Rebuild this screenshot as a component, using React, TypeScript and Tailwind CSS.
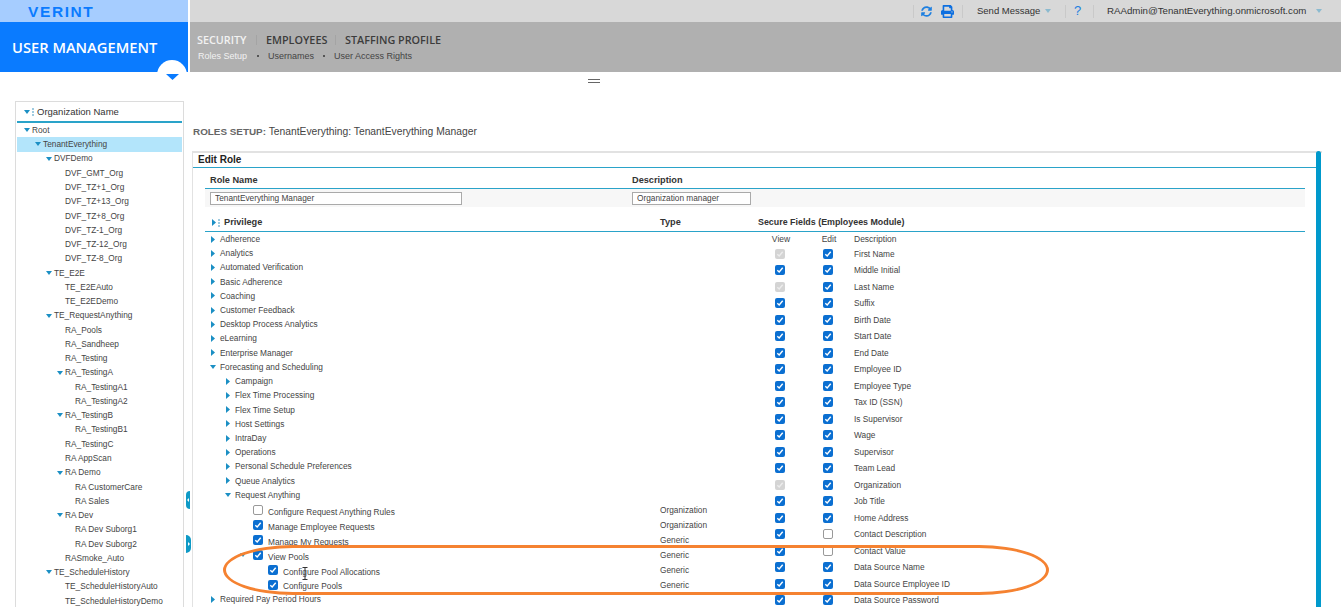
import { FaPrint, FaSyncAlt } from "react-icons/fa";

const treeRows = [
  { name: "Root", pad: "pl-[5px]", open: true },
  { name: "TenantEverything", pad: "pl-[16px]", open: true, selected: true },
  { name: "DVFDemo", pad: "pl-[27px]", open: true },
  { name: "DVF_GMT_Org", pad: "pl-[38px]" },
  { name: "DVF_TZ+1_Org", pad: "pl-[38px]" },
  { name: "DVF_TZ+13_Org", pad: "pl-[38px]" },
  { name: "DVF_TZ+8_Org", pad: "pl-[38px]" },
  { name: "DVF_TZ-1_Org", pad: "pl-[38px]" },
  { name: "DVF_TZ-12_Org", pad: "pl-[38px]" },
  { name: "DVF_TZ-8_Org", pad: "pl-[38px]" },
  { name: "TE_E2E", pad: "pl-[27px]", open: true },
  { name: "TE_E2EAuto", pad: "pl-[38px]" },
  { name: "TE_E2EDemo", pad: "pl-[38px]" },
  { name: "TE_RequestAnything", pad: "pl-[27px]", open: true },
  { name: "RA_Pools", pad: "pl-[38px]" },
  { name: "RA_Sandheep", pad: "pl-[38px]" },
  { name: "RA_Testing", pad: "pl-[38px]" },
  { name: "RA_TestingA", pad: "pl-[38px]", open: true },
  { name: "RA_TestingA1", pad: "pl-[48px]" },
  { name: "RA_TestingA2", pad: "pl-[48px]" },
  { name: "RA_TestingB", pad: "pl-[38px]", open: true },
  { name: "RA_TestingB1", pad: "pl-[48px]" },
  { name: "RA_TestingC", pad: "pl-[38px]" },
  { name: "RA AppScan", pad: "pl-[38px]" },
  { name: "RA Demo", pad: "pl-[38px]", open: true },
  { name: "RA CustomerCare", pad: "pl-[48px]" },
  { name: "RA Sales", pad: "pl-[48px]" },
  { name: "RA Dev", pad: "pl-[38px]", open: true },
  { name: "RA Dev Suborg1", pad: "pl-[48px]" },
  { name: "RA Dev Suborg2", pad: "pl-[48px]" },
  { name: "RASmoke_Auto", pad: "pl-[38px]" },
  { name: "TE_ScheduleHistory", pad: "pl-[27px]", open: true },
  { name: "TE_ScheduleHistoryAuto", pad: "pl-[38px]" },
  { name: "TE_ScheduleHistoryDemo", pad: "pl-[38px]" },
];

type Privilege = {
  name: string;
  pad: string;
  caret?: "right" | "down";
  wide?: boolean;
  check?: boolean;
  nested?: boolean;
  type?: string;
  h: string;
};

const top = "h-[14.22px]";
const sub = "h-[15px]";

const privileges: Privilege[] = [
  { name: "Adherence", pad: "pl-[6px]", caret: "right", h: top },
  { name: "Analytics", pad: "pl-[6px]", caret: "right", h: top },
  { name: "Automated Verification", pad: "pl-[6px]", caret: "right", h: top },
  { name: "Basic Adherence", pad: "pl-[6px]", caret: "right", h: top },
  { name: "Coaching", pad: "pl-[6px]", caret: "right", h: top },
  { name: "Customer Feedback", pad: "pl-[6px]", caret: "right", h: top },
  { name: "Desktop Process Analytics", pad: "pl-[6px]", caret: "right", h: top },
  { name: "eLearning", pad: "pl-[6px]", caret: "right", h: top },
  { name: "Enterprise Manager", pad: "pl-[6px]", caret: "right", h: top },
  { name: "Forecasting and Scheduling", pad: "pl-[6px]", caret: "down", h: top },
  { name: "Campaign", pad: "pl-[21px]", caret: "right", h: top },
  { name: "Flex Time Processing", pad: "pl-[21px]", caret: "right", h: top },
  { name: "Flex Time Setup", pad: "pl-[21px]", caret: "right", h: top },
  { name: "Host Settings", pad: "pl-[21px]", caret: "right", h: top },
  { name: "IntraDay", pad: "pl-[21px]", caret: "right", h: top },
  { name: "Operations", pad: "pl-[21px]", caret: "right", h: top },
  { name: "Personal Schedule Preferences", pad: "pl-[21px]", caret: "right", h: top },
  { name: "Queue Analytics", pad: "pl-[21px]", caret: "right", h: top },
  { name: "Request Anything", pad: "pl-[21px]", caret: "down", h: "h-[15px]" },
  { name: "Configure Request Anything Rules", pad: "pl-[33px]", wide: true, check: false, type: "Organization", h: sub },
  { name: "Manage Employee Requests", pad: "pl-[33px]", wide: true, check: true, type: "Organization", h: sub },
  { name: "Manage My Requests", pad: "pl-[33px]", wide: true, check: true, type: "Generic", h: sub },
  { name: "View Pools", pad: "pl-[33px]", wide: true, caret: "down", check: true, type: "Generic", h: sub },
  { name: "Configure Pool Allocations", pad: "pl-[33px]", wide: true, nested: true, check: true, type: "Generic", h: sub },
  { name: "Configure Pools", pad: "pl-[33px]", wide: true, nested: true, check: true, type: "Generic", h: "h-[14.4px]" },
  { name: "Required Pay Period Hours", pad: "pl-[6px]", caret: "right", h: top },
];

type Mark = "on" | "off" | "locked";

const secureFields: [string, Mark, Mark][] = [
  ["First Name", "locked", "on"],
  ["Middle Initial", "on", "on"],
  ["Last Name", "locked", "on"],
  ["Suffix", "on", "on"],
  ["Birth Date", "on", "on"],
  ["Start Date", "on", "on"],
  ["End Date", "on", "on"],
  ["Employee ID", "on", "on"],
  ["Employee Type", "on", "on"],
  ["Tax ID (SSN)", "on", "on"],
  ["Is Supervisor", "on", "on"],
  ["Wage", "on", "on"],
  ["Supervisor", "on", "on"],
  ["Team Lead", "on", "on"],
  ["Organization", "locked", "on"],
  ["Job Title", "on", "on"],
  ["Home Address", "on", "on"],
  ["Contact Description", "on", "off"],
  ["Contact Value", "on", "off"],
  ["Data Source Name", "on", "on"],
  ["Data Source Employee ID", "on", "on"],
  ["Data Source Password", "on", "on"],
];

const CaretDown = ({ className = "" }: { className?: string }) => (
  <svg width="6" height="4" viewBox="0 0 6 4" className={className}>
    <path d="M0 0H6L3 4Z" fill="#1b8fc4" />
  </svg>
);

const CaretRight = ({ className = "" }: { className?: string }) => (
  <svg width="4" height="7" viewBox="0 0 4 7" className={className}>
    <path d="M0 0V7L4 3.5Z" fill="#1b8fc4" />
  </svg>
);

const Grip = () => (
  <div className="flex flex-col gap-px w-[2px] mx-[2px]">
    <div className="h-[2px] bg-[#9fcbe0]" />
    <div className="h-[2px] bg-[#9fcbe0]" />
    <div className="h-[2px] bg-[#9fcbe0]" />
  </div>
);

const CheckBox = ({ mark }: { mark: Mark }) => {
  if (mark === "off") {
    return <div className="w-[10px] h-[10px] rounded-[2px] border border-[#999] bg-white" />;
  }
  return (
    <div
      className={`w-[10px] h-[10px] rounded-[2px] flex items-center justify-center ${
        mark === "on" ? "bg-[#0b6fd1]" : "bg-[#d4d4d4]"
      }`}
    >
      <svg width="8" height="8" viewBox="0 0 8 8" fill="none">
        <path d="M1.3 4.2 3.2 6 6.7 1.8" stroke={mark === "on" ? "#fff" : "#ececec"} strokeWidth="1.4" />
      </svg>
    </div>
  );
};

const Separator = ({ className = "" }: { className?: string }) => <div className={`w-px h-[13px] bg-[#c9c9c9] ${className}`} />;

const TopBar = () => (
  <div className="h-[22px] bg-[#d8d8d8] flex items-center text-[9.5px] font-medium text-[#333]">
    <Separator className="ml-[723px]" />
    <FaSyncAlt className="ml-[7px] text-[#1d7fe0]" size={11} />
    <FaPrint className="ml-[9px] text-[#0d6fe0]" size={13} />
    <Separator className="ml-[8px]" />
    <span className="ml-[14px] w-[63px] whitespace-nowrap">Send Message</span>
    <CaretDown className="ml-[5px] opacity-40" />
    <Separator className="ml-[14px]" />
    <span className="ml-[8px] w-[19px] text-[13px] text-[#1d7fe0]">?</span>
    <Separator />
    <span className="ml-[13px] w-[202px] text-[9.7px] whitespace-nowrap">RAAdmin@TenantEverything.onmicrosoft.com</span>
    <CaretDown className="ml-[7px] opacity-40" />
  </div>
);

const Header = () => (
  <div className="flex h-[72px]">
    <div className="relative w-[188px] shrink-0">
      <div className="h-[22px] bg-[#a6cdff] pl-[28px] pt-[3px] font-bold text-[15.5px] leading-[18px] tracking-[1.6px] text-[#0a7bff]">
        VERINT
      </div>
      <div className="h-[50px] bg-[#0a7bff] pl-[12px] pt-[14px] font-['Open_Sans',sans-serif] font-semibold text-[14.7px] leading-[22px] text-white whitespace-nowrap">
        USER MANAGEMENT
      </div>
      <div className="absolute left-[157px] top-[60px] w-[30px] h-[30px] rounded-full bg-white flex justify-center pt-[14px]">
        <svg width="13" height="6" viewBox="0 0 13 6" className="shrink-0">
          <path d="M0 0H13L6.5 6Z" fill="#0a7bff" />
        </svg>
      </div>
    </div>
    <div className="ml-[2px] flex-1">
      <TopBar />
      <div className="h-[50px] bg-[#b0b0b0] pl-[7px] pt-[10px]">
        <div className="flex items-center font-['Open_Sans',sans-serif] font-semibold text-[10.8px] leading-[16px] text-[#3c3c3c]">
          <span className="text-[#f2f2f2] w-[50px]">SECURITY</span>
          <div className="w-px h-[10px] bg-[#a4a4a4] mx-[9px]" />
          <span className="w-[60px]">EMPLOYEES</span>
          <div className="w-px h-[10px] bg-[#a4a4a4] mx-[9px]" />
          <span>STAFFING PROFILE</span>
        </div>
        <div className="flex items-center mt-[1px] ml-px text-[9px] leading-[14px] text-[#444]">
          <span className="text-[#f2f2f2]">Roles Setup</span>
          <div className="w-[2px] h-[2px] bg-[#555] mx-[9.5px]" />
          <span>Usernames</span>
          <div className="w-[2px] h-[2px] bg-[#555] mx-[9px]" />
          <span>User Access Rights</span>
        </div>
      </div>
    </div>
  </div>
);

const OrgTree = () => (
  <div className="w-[169px] ml-[15px] mt-[29px] border-x border-t border-[#dcdcdc] px-px h-[520px] shrink-0">
    <div className="h-[21px] flex items-center pl-[7px] pt-px text-[9.5px] font-medium text-[#333] border-b-2 border-[#2aa3c9]">
      <CaretDown />
      <Grip />
      <span className="ml-[1px]">Organization Name</span>
    </div>
    {treeRows.map((row) => (
      <div
        key={row.name}
        className={`h-[14.27px] flex items-center text-[8.3px] text-[#444] whitespace-nowrap ${row.pad} ${
          row.selected ? "bg-[#b3e5fb]" : ""
        }`}
      >
        <div className="w-[10px] shrink-0">{row.open && <CaretDown className="ml-[1.5px]" />}</div>
        {row.name}
      </div>
    ))}
  </div>
);

const PrivilegeRow = ({ row }: { row: Privilege }) => (
  <div className={`flex items-center ${row.h}`}>
    <div className={`w-[455px] shrink-0 flex items-center ${row.pad}`}>
      <div className={`${row.wide ? "w-[15px]" : "w-[9px]"} shrink-0 flex items-center`}>
        {row.caret === "right" && <CaretRight />}
        {row.caret === "down" && <CaretDown className={row.wide ? "ml-[2px]" : "-ml-px"} />}
      </div>
      {row.nested && <div className="w-[15px] shrink-0" />}
      {row.check !== undefined && (
        <div className="w-[15px] shrink-0 -mt-px">
          <CheckBox mark={row.check ? "on" : "off"} />
        </div>
      )}
      <span className={`whitespace-nowrap ${row.check !== undefined ? "mt-[3px]" : ""}`}>{row.name}</span>
    </div>
    <span>{row.type}</span>
  </div>
);

const EditRole = () => (
  <div className="relative w-[1130px] ml-[2px] mt-[13px] border-t-2 border-l border-[#e2e2e2] h-[460px]">
    <div className="absolute -top-[2px] right-[1px] w-[5px] h-[470px] rounded-t bg-[#0099cc]" />
    <div className="h-[15px] pl-[5px] text-[10px] leading-[13px] font-bold text-[#222] border-b border-[#2aa3c9] w-[1124px]">
      Edit Role
    </div>
    <div className="ml-[12px] w-[1100px]">
      <div className="flex h-[21px] pt-[6px] pl-[5px] text-[9.2px] leading-[13px] font-bold text-[#333] border-b border-[#2aa3c9]">
        <span className="w-[422px]">Role Name</span>
        <span>Description</span>
      </div>
      <div className="flex items-center h-[18px] pl-[5px] bg-[#f7f7f7] text-[8.3px]">
        <div className="w-[422px]">
          <input
            readOnly
            value="TenantEverything Manager"
            className="block w-[252px] h-[13px] border border-[#aaa] bg-white pl-[4px] text-[#444] outline-none"
          />
        </div>
        <input
          readOnly
          value="Organization manager"
          className="block w-[119px] h-[13px] border border-[#aaa] bg-white pl-[4px] text-[#444] outline-none"
        />
      </div>
      <div className="flex items-center h-[25px] pt-[8px] text-[9.2px] font-bold text-[#333] border-b border-[#2aa3c9]">
        <div className="w-[455px] pl-[7px] flex items-center">
          <CaretRight />
          <Grip />
          <span className="ml-[2px]">Privilege</span>
        </div>
        <span className="w-[98px]">Type</span>
        <span className="whitespace-nowrap text-[8.9px]">Secure Fields (Employees Module)</span>
      </div>
      <div className="flex text-[8.3px] text-[#444]">
        <div className="w-[553px] shrink-0">
          {privileges.map((row) => (
            <PrivilegeRow key={row.name} row={row} />
          ))}
        </div>
        <div className="pt-px">
          <div className="flex items-center h-[12.5px] text-[8.5px]">
            <span className="w-[46px] text-center">View</span>
            <span className="w-[50px] text-center">Edit</span>
            <span>Description</span>
          </div>
          {secureFields.map(([name, view, edit]) => (
            <div key={name} className="flex items-center h-[16.5px]">
              <div className="w-[44px] flex justify-center">
                <CheckBox mark={view} />
              </div>
              <div className="w-[52px] flex justify-center">
                <CheckBox mark={edit} />
              </div>
              <span className="whitespace-nowrap">{name}</span>
            </div>
          ))}
        </div>
      </div>
    </div>
  </div>
);

export default function App() {
  return (
    <div className="relative w-[1341px] h-[607px] overflow-hidden bg-white font-['Liberation_Sans',sans-serif]">
      <Header />
      <div className="flex">
        <OrgTree />
        <div className="ml-[6px] flex-1">
          <div className="h-[66px] pt-[53px] pl-[3px] text-[10.3px] leading-[13px] text-[#444] whitespace-nowrap">
            <span className="font-bold text-[9.9px] text-[#666]">ROLES SETUP:</span> TenantEverything: TenantEverything Manager
          </div>
          <EditRole />
        </div>
      </div>

      {/* splitter grip */}
      <div className="absolute left-[588px] top-[79px] w-[12px] h-[4px] border-y border-[#666]" />

      {/* panel collapse handles */}
      <div className="absolute left-[186px] top-[491px] w-[4px] h-[18px] rounded-l-full bg-[#0f9ac6] flex items-center justify-center">
        <svg width="2" height="4" viewBox="0 0 2 4">
          <path d="M2 0V4L0 2Z" fill="#fff" />
        </svg>
      </div>
      <div className="absolute left-[186px] top-[535px] w-[5px] h-[18px] rounded-r-full bg-[#0f9ac6] flex items-center justify-center">
        <svg width="2" height="4" viewBox="0 0 2 4">
          <path d="M0 0V4L2 2Z" fill="#fff" />
        </svg>
      </div>

      {/* orange annotation */}
      <div className="absolute left-[223px] top-[545px] w-[826px] h-[50px] rounded-[70px/25px] border-[3px] border-[#f58231]" />

      {/* text cursor */}
      <svg className="absolute left-[302px] top-[567px]" width="6" height="13" viewBox="0 0 6 13" fill="none">
        <path d="M0.5 0.5H5.5M3 0.5V12.5M0.5 12.5H5.5" stroke="#333" />
      </svg>
    </div>
  );
}
